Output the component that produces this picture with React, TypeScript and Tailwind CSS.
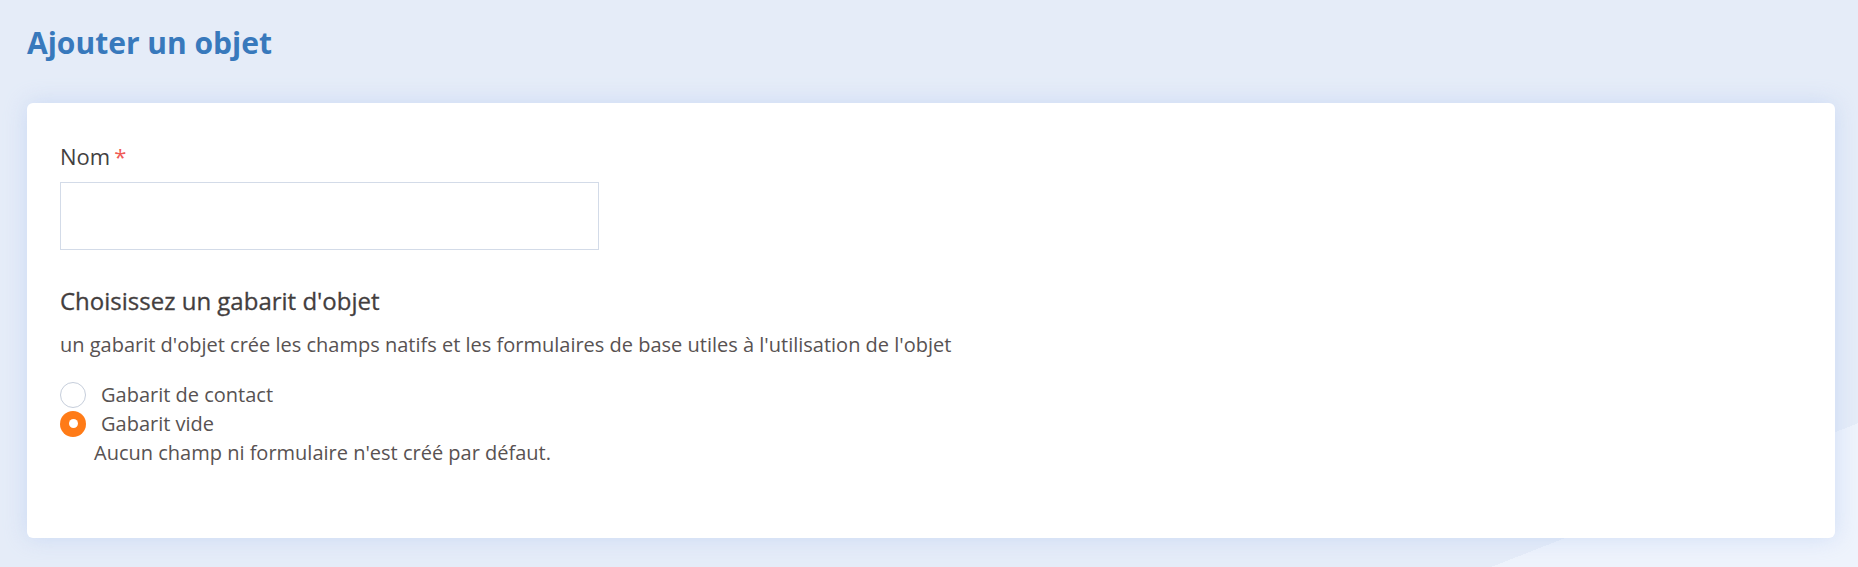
function Radio({ checked }: { checked?: boolean }) {
  if (checked) {
    return (
      <span className="flex h-[26px] w-[26px] shrink-0 items-center justify-center rounded-full bg-[#ff7b17]">
        <span className="h-[9px] w-[9px] rounded-full bg-white" />
      </span>
    )
  }
  return <span className="h-[26px] w-[26px] shrink-0 rounded-full border-[1.5px] border-[#c6cedb] bg-white" />
}

function TemplateOption({ label, checked }: { label: string; checked?: boolean }) {
  return (
    <div className="flex h-[29px] items-center">
      <Radio checked={checked} />
      <span className="ml-[15px] text-[20px] leading-[29px] text-[#575252]">{label}</span>
    </div>
  )
}

export default function App() {
  return (
    <div className="min-h-screen w-full bg-[linear-gradient(158.6deg,#e5ecf8_88.9%,#eef3fc_88.9%)] pl-[27px] pr-[23px] pt-[25px] font-['Open_Sans',sans-serif]">
      <h1 className="text-[30px] font-bold leading-[36px] text-[#3879bc]">Ajouter un objet</h1>

      <div className="mt-[42px] rounded-[6px] bg-white px-[33px] pb-[71px] pt-[38px] shadow-[0_0_22px_rgba(170,195,240,0.45)]">
        <label className="block text-[22px] font-medium leading-[30px] text-[#433f3f]">
          Nom<span className="ml-[4px] text-[#f05a55]">*</span>
        </label>
        <input type="text" className="mt-[11px] block h-[68px] w-[539px] border border-[#d3dbe8] bg-white outline-none" />

        <h2 className="mt-[36px] text-[24px] leading-[30px] text-[#433e3e] [-webkit-text-stroke:0.3px_#433e3e]">Choisissez un gabarit d'objet</h2>
        <p className="mt-[15px] text-[20px] leading-[28px] text-[#585252]">
          un gabarit d'objet crée les champs natifs et les formulaires de base utiles à l'utilisation de l'objet
        </p>

        <div className="mt-[21px] flex flex-col">
          <TemplateOption label="Gabarit de contact" />
          <TemplateOption label="Gabarit vide" checked />
          <p className="ml-[34px] text-[20px] leading-[29px] text-[#585252]">Aucun champ ni formulaire n'est créé par défaut.</p>
        </div>
      </div>
    </div>
  )
}
